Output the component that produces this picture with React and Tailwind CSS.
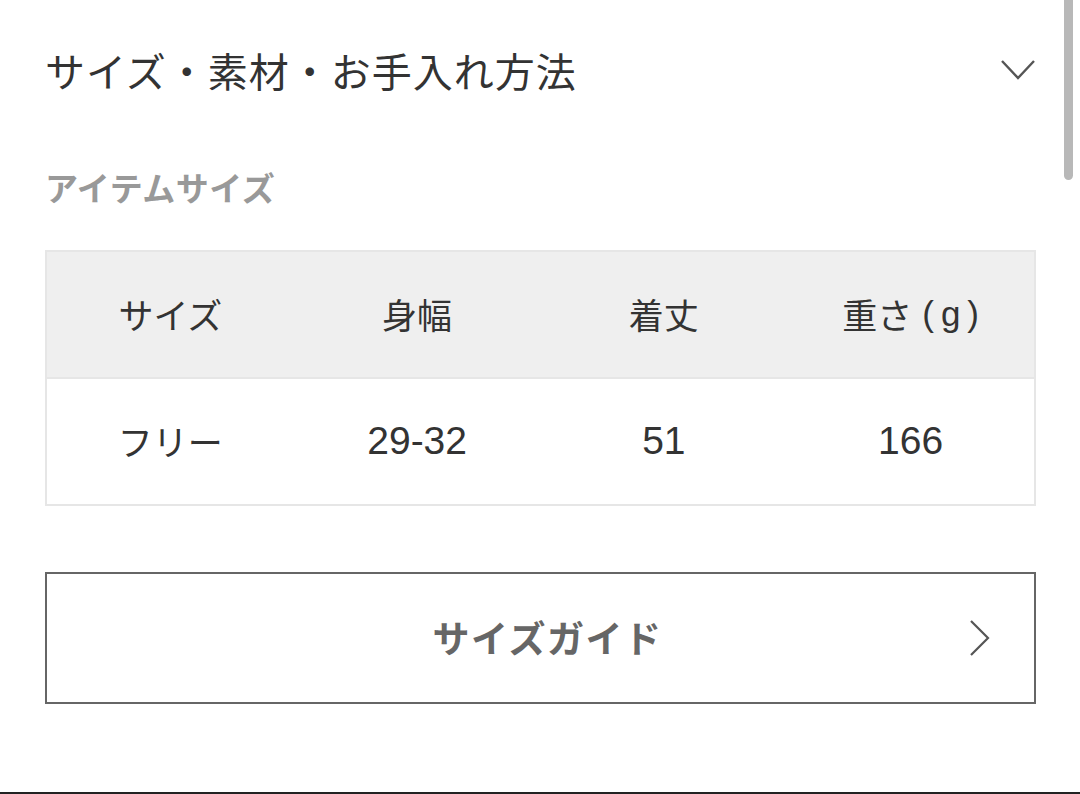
import React from 'react';

const font = { fontFamily: '"Noto Sans CJK JP", "Noto Sans", sans-serif' };
const latin = { fontFamily: '"Liberation Sans", "Noto Sans CJK JP", sans-serif' };

const values = ['フリー', '29-32', '51', '166'];

const ChevronDown = () => (
  <svg width="36" height="22" viewBox="0 0 36 22" fill="none">
    <path d="M2 2L18 19L34 2" stroke="#555" strokeWidth="2.4" />
  </svg>
);

const ChevronRight = () => (
  <svg width="22" height="36" viewBox="0 0 22 36" fill="none">
    <path d="M2 1L19 18L2 35" stroke="#555" strokeWidth="2.2" />
  </svg>
);

const App = () => {
  const headers = [
    'サイズ',
    '身幅',
    '着丈',
    <>
      重さ
      <span className="ml-[10px]" style={latin}>
        (<span className="mx-[7px]">g</span>)
      </span>
    </>,
  ];

  return (
    <div className="relative w-[1080px] h-[794px] bg-white overflow-hidden" style={font}>
      {/* scrollbar */}
      <div className="absolute right-[7px] top-0 w-[9px] h-[180px] rounded-b-full bg-[#b8b8b8]" />

      <div className="px-[45px] pr-[44px]">
        {/* Section header */}
        <div className="flex items-center justify-between h-[144px] pb-[4px]">
          <h2 className="text-[40px] text-[#333] tracking-[1px] leading-none">
            サイズ・素材・お手入れ方法
          </h2>
          <ChevronDown />
        </div>

        <h3 className="text-[33px] font-bold text-[#999] tracking-[0.5px] leading-none mt-[27px]">
          アイテムサイズ
        </h3>

        {/* Size table */}
        <div className="mt-[46px] border-2 border-[#e6e6e6]">
          <div className="grid grid-cols-4 h-[127px] bg-[#efefef] border-b-2 border-[#e6e6e6]">
            {headers.map((h, i) => (
              <div key={i} className="flex items-center justify-center text-[35px] text-[#333]">
                {h}
              </div>
            ))}
          </div>
          <div className="grid grid-cols-4 h-[125px] bg-white">
            {values.map((v, i) => (
              <div
                key={v}
                className={`flex items-center justify-center text-[#333] ${i === 0 ? 'text-[35px]' : 'text-[39px]'}`}
                style={i === 0 ? undefined : latin}
              >
                {v}
              </div>
            ))}
          </div>
        </div>

        {/* Size guide button */}
        <button className="relative mt-[66px] w-full h-[132px] border-2 border-[#666] flex items-center justify-center">
          <span className="ml-[14px] text-[37px] font-bold text-[#666] tracking-[1.5px]">サイズガイド</span>
          <span className="absolute right-[43px] top-1/2 -translate-y-1/2 flex">
            <ChevronRight />
          </span>
        </button>
      </div>

      <div className="absolute left-0 right-0 bottom-0 h-[2px] bg-[#222]" />
    </div>
  );
};

export default App;
